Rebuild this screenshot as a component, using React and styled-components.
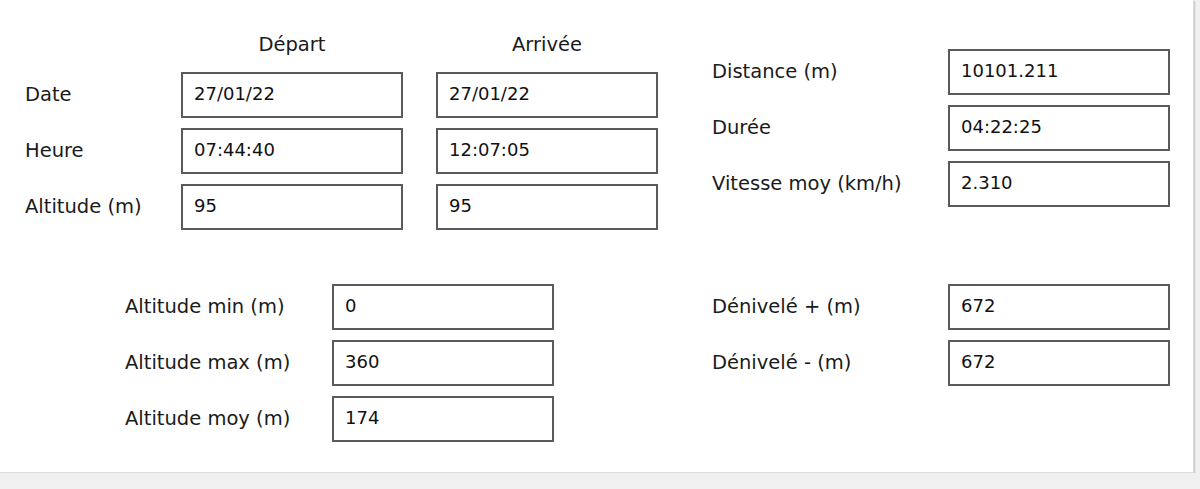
import React from "react";
import styled, { createGlobalStyle } from "styled-components";

const GlobalStyle = createGlobalStyle`
  html, body {
    margin: 0;
    padding: 0;
    background: #f0f0f0;
  }
  body {
    font-family: "DejaVu Sans", "Liberation Sans", sans-serif;
    color: #1a1a1a;
  }
`;

const Panel = styled.div`
  box-sizing: border-box;
  width: 1194px;
  height: 473px;
  background: #ffffff;
  border-right: 1px solid #dcdcdc;
  border-bottom: 1px solid #dcdcdc;
  box-shadow: 1px 1px 0 #cccccc, 2px 2px 0 #e6e6e6;
  padding-left: 25px;
  display: flex;
  flex-direction: column;
`;

const Row = styled.div`
  display: flex;
  align-items: flex-start;
  margin-top: ${(p) => p.$top}px;
`;

const Group = styled.div`
  display: grid;
  grid-template-columns: ${(p) => p.$cols};
  column-gap: 33px;
  row-gap: 10px;
  align-items: center;
  width: ${(p) => p.$width}px;
  margin-top: ${(p) => p.$top || 0}px;
  padding-left: ${(p) => p.$indent || 0}px;
  box-sizing: border-box;
`;

const Header = styled.div`
  font-size: 19.5px;
  line-height: 22px;
  text-align: center;
  margin-bottom: 6px;
`;

const Label = styled.div`
  font-size: 19.5px;
  line-height: 22px;
  white-space: nowrap;
`;

const Field = styled.div`
  box-sizing: border-box;
  height: 46px;
  border: 2px solid #5a5a5a;
  background: #fff;
  padding: 9px 0 0 11px;
  font-size: 18px;
  line-height: 22px;
  color: #111;
`;

const Spacer = styled.div``;

export default function App() {
  return (
    <>
      <GlobalStyle />
      <Panel>
        <Row $top={34}>
          <Group $cols="123px 222px 222px" $width={687}>
            <Spacer />
            <Header>Départ</Header>
            <Header>Arrivée</Header>
            <Label>Date</Label>
            <Field>27/01/22</Field>
            <Field>27/01/22</Field>
            <Label>Heure</Label>
            <Field>07:44:40</Field>
            <Field>12:07:05</Field>
            <Label>Altitude (m)</Label>
            <Field>95</Field>
            <Field>95</Field>
          </Group>
          <Group $cols="203px 222px" $width={458} $top={15}>
            <Label>Distance (m)</Label>
            <Field>10101.211</Field>
            <Label>Durée</Label>
            <Field>04:22:25</Field>
            <Label>Vitesse moy (km/h)</Label>
            <Field>2.310</Field>
          </Group>
        </Row>
        <Row $top={54}>
          <Group $cols="174px 222px" $width={687} $indent={100}>
            <Label>Altitude min (m)</Label>
            <Field>0</Field>
            <Label>Altitude max (m)</Label>
            <Field>360</Field>
            <Label>Altitude moy (m)</Label>
            <Field>174</Field>
          </Group>
          <Group $cols="203px 222px" $width={458}>
            <Label>Dénivelé + (m)</Label>
            <Field>672</Field>
            <Label>Dénivelé - (m)</Label>
            <Field>672</Field>
          </Group>
        </Row>
      </Panel>
    </>
  );
}
